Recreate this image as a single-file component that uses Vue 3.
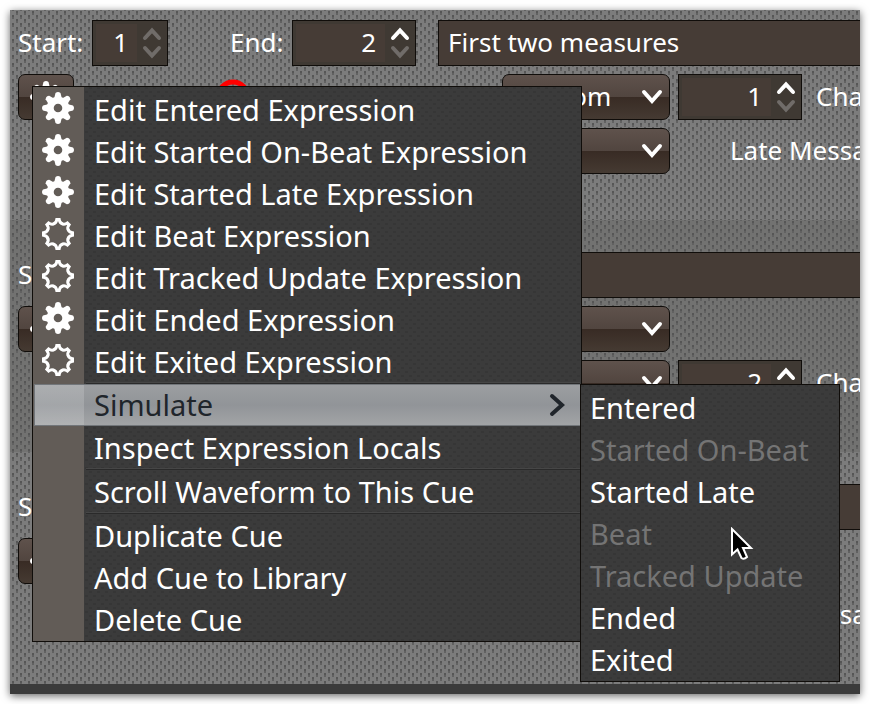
<script setup>
import { ref } from 'vue'

const toothAngles = Array.from({ length: 8 }, (_, i) => i * 45)

const cues = ref([
  { id: 1, start: 1, end: 2, comment: 'First two measures', messages: [{ value: 'Custom', note: 1 }, { value: '', late: true }] },
  { id: 2, start: 3, end: 4, comment: '', messages: [{ value: '' }, { value: '', note: 2 }] },
  { id: 3, start: 5, end: 6, comment: '', messages: [{ value: '' }, { value: '', late: true }] },
])

const groups = [
  [
    { label: 'Edit Entered Expression', icon: 'full' },
    { label: 'Edit Started On-Beat Expression', icon: 'full' },
    { label: 'Edit Started Late Expression', icon: 'full' },
    { label: 'Edit Beat Expression', icon: 'empty' },
    { label: 'Edit Tracked Update Expression', icon: 'empty' },
    { label: 'Edit Ended Expression', icon: 'full' },
    { label: 'Edit Exited Expression', icon: 'empty' },
  ],
  [
    { label: 'Simulate', active: true },
    { label: 'Inspect Expression Locals' },
  ],
  [{ label: 'Scroll Waveform to This Cue' }],
  [
    { label: 'Duplicate Cue' },
    { label: 'Add Cue to Library' },
    { label: 'Delete Cue' },
  ],
]

const simulate = [
  { label: 'Entered' },
  { label: 'Started On-Beat', off: true },
  { label: 'Started Late' },
  { label: 'Beat', off: true },
  { label: 'Tracked Update', off: true },
  { label: 'Ended' },
  { label: 'Exited' },
]
</script>

<template>
  <div class="page">
    <main class="window">
      <section v-for="cue in cues" :key="cue.id" class="cue">
        <div class="row">
          <label class="label start" :for="`start-${cue.id}`">Start:</label>
          <div class="spinner narrow">
            <input :id="`start-${cue.id}`" v-model="cue.start" type="number" />
            <div class="arrows">
              <button class="off" aria-label="Increase start"><svg viewBox="0 0 20 14"><path d="M3 11 10 3.500 17 11" /></svg></button>
              <button class="off" aria-label="Decrease start"><svg viewBox="0 0 20 14"><path d="M3 3 10 10.500 17 3" /></svg></button>
            </div>
          </div>
          <label class="label end" :for="`end-${cue.id}`">End:</label>
          <div class="spinner">
            <input :id="`end-${cue.id}`" v-model="cue.end" type="number" />
            <div class="arrows">
              <button aria-label="Increase end"><svg viewBox="0 0 20 14"><path d="M3 11 10 3.500 17 11" /></svg></button>
              <button class="off" aria-label="Decrease end"><svg viewBox="0 0 20 14"><path d="M3 3 10 10.500 17 3" /></svg></button>
            </div>
          </div>
          <input v-model="cue.comment" class="comment" type="text" aria-label="Comment" />
        </div>

        <div v-for="(message, n) in cue.messages" :key="n" class="row">
          <div class="lead">
            <template v-if="n === 0">
              <button class="gear-button" aria-label="Cue actions">
                <svg class="gear" viewBox="-16 -16 32 32">
                  <path v-for="a in toothAngles" :key="a" class="cog" :transform="`rotate(${a})`" d="M-4 -9L-2.500 -15Q0 -17 2.500 -15L4 -9Z" />
                  <circle class="ring" r="7.800" />
                </svg>
              </button>
              <span class="label state-label">Entered:</span>
              <svg v-if="cue.id === 1" class="state" viewBox="0 0 38 38"><circle cx="19" cy="19" r="15" /></svg>
            </template>
          </div>
          <div class="select">
            <select v-model="message.value" :aria-label="`Message ${n + 1} of cue ${cue.id}`">
              <option value=""></option>
              <option value="Custom">Custom</option>
            </select>
            <svg viewBox="0 0 24 18"><path d="M4 4 12 13 20 4" /></svg>
          </div>
          <template v-if="message.note">
            <div class="spinner">
              <input v-model="message.note" type="number" aria-label="Note" />
              <div class="arrows">
                <button aria-label="Increase note"><svg viewBox="0 0 20 14"><path d="M3 11 10 3.500 17 11" /></svg></button>
                <button class="off" aria-label="Decrease note"><svg viewBox="0 0 20 14"><path d="M3 3 10 10.500 17 3" /></svg></button>
              </div>
            </div>
            <span class="label channel">Channel:</span>
          </template>
          <span v-else-if="message.late" class="label late">Late Message:</span>
        </div>
      </section>
      <footer class="bar"></footer>
    </main>

    <div class="menu main-menu" role="menu">
      <div v-for="(group, g) in groups" :key="g" class="group">
        <button v-for="item in group" :key="item.label" class="item" :class="{ active: item.active }" role="menuitem">
          <span class="icon">
            <svg v-if="item.icon === 'full'" class="gear" viewBox="-16 -16 32 32">
              <path v-for="a in toothAngles" :key="a" class="cog" :transform="`rotate(${a})`" d="M-4 -9L-2.500 -15Q0 -17 2.500 -15L4 -9Z" />
              <circle class="ring" r="7.800" />
            </svg>
            <svg v-else-if="item.icon" class="gear" viewBox="-16 -16 32 32">
              <path
                v-for="a in toothAngles"
                :key="a"
                class="outline"
                :transform="`rotate(${a})`"
                d="M-4.300 -10.200Q-1.800 -10.800 -1.200 -14.500H1.200Q1.800 -10.800 4.300 -10.200"
              />
            </svg>
          </span>
          <span>{{ item.label }}</span>
          <svg v-if="item.active" class="more" viewBox="0 0 18 24"><path d="M4 3 14 12 4 21" /></svg>
        </button>
      </div>
    </div>

    <div class="menu sub-menu" role="menu">
      <button v-for="item in simulate" :key="item.label" class="item" :disabled="item.off" role="menuitem">{{ item.label }}</button>
    </div>

    <svg class="cursor" viewBox="0 0 24 34">
      <path d="M2 2V27.500L7.500 22.500L11.500 31Q14 33 17 30L13 21H21Z" />
    </svg>
  </div>
</template>

<style>
body {
  margin: 0;
  background: #fff;
}
</style>

<style scoped>
.page {
  position: relative;
  box-sizing: border-box;
  min-height: 100vh;
  padding: 10px;
  overflow: hidden;
  color: #fff;
  font: 26px/32px "Noto Sans", sans-serif;
}
.page * {
  box-sizing: border-box;
}
button,
input,
select {
  margin: 0;
  padding: 0;
  border: 0;
  background: none;
  color: inherit;
  font: inherit;
}
svg {
  flex: none;
  fill: none;
  stroke: currentColor;
  stroke-width: 4;
  stroke-linecap: round;
}
.window {
  overflow: hidden;
  box-shadow: 0 2px 8px rgba(0, 0, 0, 0.6);
}
.cue {
  display: flex;
  flex-direction: column;
  gap: 8px;
  padding: 32px 0 46px 8px;
  background-color: #7c7c7c;
  background-image:
    conic-gradient(from 270deg at 2px 2px, #565656 90deg, transparent 0),
    conic-gradient(from 270deg at 2px 4px, #616161 90deg, transparent 0),
    conic-gradient(from 270deg at 2px 2px, #565656 90deg, transparent 0),
    conic-gradient(from 270deg at 2px 4px, #616161 90deg, transparent 0);
  background-position: 2px 5px, 2px 5px, 6px 1px, 6px 1px;
  background-size: 8px 8px;
}
.cue:nth-child(even) {
  background-color: #727271;
}
.cue:first-child {
  padding-top: 10px;
}
.row {
  display: flex;
  flex: none;
  align-items: center;
  gap: 8px;
  height: 46px;
  white-space: nowrap;
}
.label {
  flex: none;
  padding-bottom: 2px;
}
.label.start {
  width: 66px;
}
.label.end {
  width: 54px;
  margin-left: 54px;
}
.label.channel {
  margin-left: 6px;
}
.label.late {
  margin-left: 52px;
}
.lead {
  display: flex;
  align-items: center;
  gap: 8px;
  flex: 0 0 476px;
}
.state-label {
  width: 124px;
  text-align: right;
}
.state {
  width: 38px;
  height: 38px;
  color: #f00;
  stroke-width: 5;
}
.spinner {
  display: flex;
  flex: none;
  width: 124px;
  height: 46px;
  padding: 3px 0 3px 3px;
  border: 1px solid #100d0a;
  background: #3f3933;
}
.spinner.narrow {
  width: 76px;
}
.spinner input {
  flex: 1;
  min-width: 0;
  padding: 0 9px 2px 0;
  background: #463c36;
  text-align: right;
  appearance: textfield;
}
.spinner input::-webkit-inner-spin-button {
  appearance: none;
}
.arrows {
  display: flex;
  flex-direction: column;
  justify-content: center;
  gap: 4px;
  width: 30px;
}
.arrows button {
  display: flex;
  justify-content: center;
}
.arrows svg {
  width: 20px;
  height: 14px;
}
.arrows .off {
  color: #706c69;
}
.comment {
  flex: 1;
  min-width: 0;
  height: 46px;
  margin-left: 14px;
  padding: 0 0 2px 9px;
  border: 1px solid #100d0a;
  border-right: 0;
  background: #463c36;
}
.gear-button,
.select {
  display: flex;
  align-items: center;
  height: 46px;
  border: 1px solid #100d0a;
  border-radius: 7px;
  background: linear-gradient(#5f524c, #51453f 50%, #382b24 50%, #453a32);
}
.gear-button {
  justify-content: center;
  flex: 0 0 56px;
}
.select {
  position: relative;
  flex: 0 0 168px;
}
.select select {
  width: 100%;
  height: 100%;
  padding: 0 0 2px 14px;
  appearance: none;
}
.select svg {
  position: absolute;
  right: 5px;
  width: 24px;
  height: 18px;
  pointer-events: none;
}
.gear {
  width: 32px;
  height: 32px;
}
.cog {
  fill: currentColor;
  stroke: none;
}
.ring {
  stroke-width: 7;
}
.outline {
  stroke-width: 3;
}
.bar {
  height: 10px;
  background: #3b3b3b;
}
.menu {
  position: absolute;
  padding: 1px;
  border: 1px solid #100d0a;
  background-color: #3b3b3b;
  background-image:
    conic-gradient(from 270deg at 3px 2px, #363636 90deg, transparent 0),
    conic-gradient(from 270deg at 3px 2px, #363636 90deg, transparent 0);
  background-position: 0 0, 4px 4px;
  background-size: 8px 8px;
  font-size: 29px;
}
.main-menu {
  top: 86px;
  left: 32px;
  width: 550px;
  background-image:
    linear-gradient(90deg, #625c57 51px, transparent 51px),
    conic-gradient(from 270deg at 3px 2px, #363636 90deg, transparent 0),
    conic-gradient(from 270deg at 3px 2px, #363636 90deg, transparent 0);
  background-position: 0 0, 0 0, 4px 4px;
  background-size: 100% 100%, 8px 8px, 8px 8px;
}
.sub-menu {
  top: 384px;
  left: 580px;
  width: 260px;
}
.group + .group::before {
  content: "";
  display: block;
  margin-left: 52px;
  border-top: 1px solid #464646;
  border-bottom: 1px solid #2a2a2a;
}
.item {
  display: flex;
  align-items: center;
  width: 100%;
  height: 42px;
  padding-top: 2px;
  text-align: left;
  white-space: nowrap;
}
.sub-menu .item {
  padding-left: 8px;
}
.item:disabled {
  color: #747474;
}
.item.active {
  padding-top: 0;
  border: 1px solid #72767a;
  border-right: 0;
  background:
    linear-gradient(90deg, rgba(255, 255, 255, 0.16) 49px, transparent 49px),
    linear-gradient(#9c9ea1, #919498 50%, #a2a4a6);
  color: #20252b;
}
.item.active .icon {
  width: 49px;
}
.icon {
  display: flex;
  flex: none;
  width: 50px;
  margin-right: 10px;
  padding: 0 0 4px 8px;
}
.more {
  width: 18px;
  height: 24px;
  margin: 0 14px 0 auto;
}
.cursor {
  position: absolute;
  top: 527px;
  left: 730px;
  width: 24px;
  height: 34px;
  fill: #000;
  stroke: #fff;
  stroke-width: 2;
}
</style>
